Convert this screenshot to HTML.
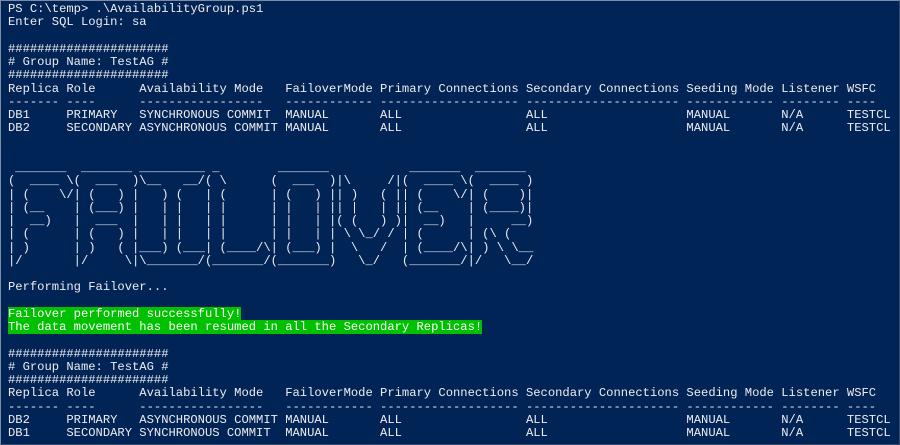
<!DOCTYPE html>
<html><head><meta charset="utf-8"><style>
html,body{margin:0;padding:0;}
body{width:900px;height:445px;overflow:hidden;background:#012456;}
.win{position:absolute;left:0;top:0;width:898px;height:443px;border:1px solid #7d8aa3;border-right-color:#33486e;border-bottom-color:#33486e;background:#012456;}
pre{position:absolute;left:7px;top:2px;margin:0;font-family:"Liberation Mono",monospace;font-size:12.17px;line-height:13.25px;color:#eeedf0;white-space:pre;letter-spacing:0;}
.g{background:#00c000;color:#fff;}
</style></head><body><div class="win"><pre>PS C:\temp&gt; .\AvailabilityGroup.ps1
Enter SQL Login: sa

######################
# Group Name: TestAG #
######################
Replica Role      Availability Mode   FailoverMode Primary Connections Secondary Connections Seeding Mode Listener WSFC
------- ----      -----------------   ------------ ------------------- --------------------- ------------ -------- ----
DB1     PRIMARY   SYNCHRONOUS COMMIT  MANUAL       ALL                 ALL                   MANUAL       N/A      TESTCL
DB2     SECONDARY ASYNCHRONOUS COMMIT MANUAL       ALL                 ALL                   MANUAL       N/A      TESTCL


 _______  _______ _________ _        _______           _______  _______ 
(  ____ \(  ___  )\__   __/( \      (  ___  )|\     /|(  ____ \(  ____ )
| (    \/| (   ) |   ) (   | (      | (   ) || )   ( || (    \/| (    )|
| (__    | (___) |   | |   | |      | |   | || |   | || (__    | (____)|
|  __)   |  ___  |   | |   | |      | |   | |( (   ) )|  __)   |     __)
| (      | (   ) |   | |   | |      | |   | | \ \_/ / | (      | (\ (   
| )      | )   ( |___) (___| (____/\| (___) |  \   /  | (____/\| ) \ \__
|/       |/     \|\_______/(_______/(_______)   \_/   (_______/|/   \__/

Performing Failover...

<span class="g">Failover performed successfully!</span>
<span class="g">The data movement has been resumed in all the Secondary Replicas!</span>

######################
# Group Name: TestAG #
######################
Replica Role      Availability Mode   FailoverMode Primary Connections Secondary Connections Seeding Mode Listener WSFC
------- ----      -----------------   ------------ ------------------- --------------------- ------------ -------- ----
DB2     PRIMARY   ASYNCHRONOUS COMMIT MANUAL       ALL                 ALL                   MANUAL       N/A      TESTCL
DB1     SECONDARY SYNCHRONOUS COMMIT  MANUAL       ALL                 ALL                   MANUAL       N/A      TESTCL</pre></div></body></html>
